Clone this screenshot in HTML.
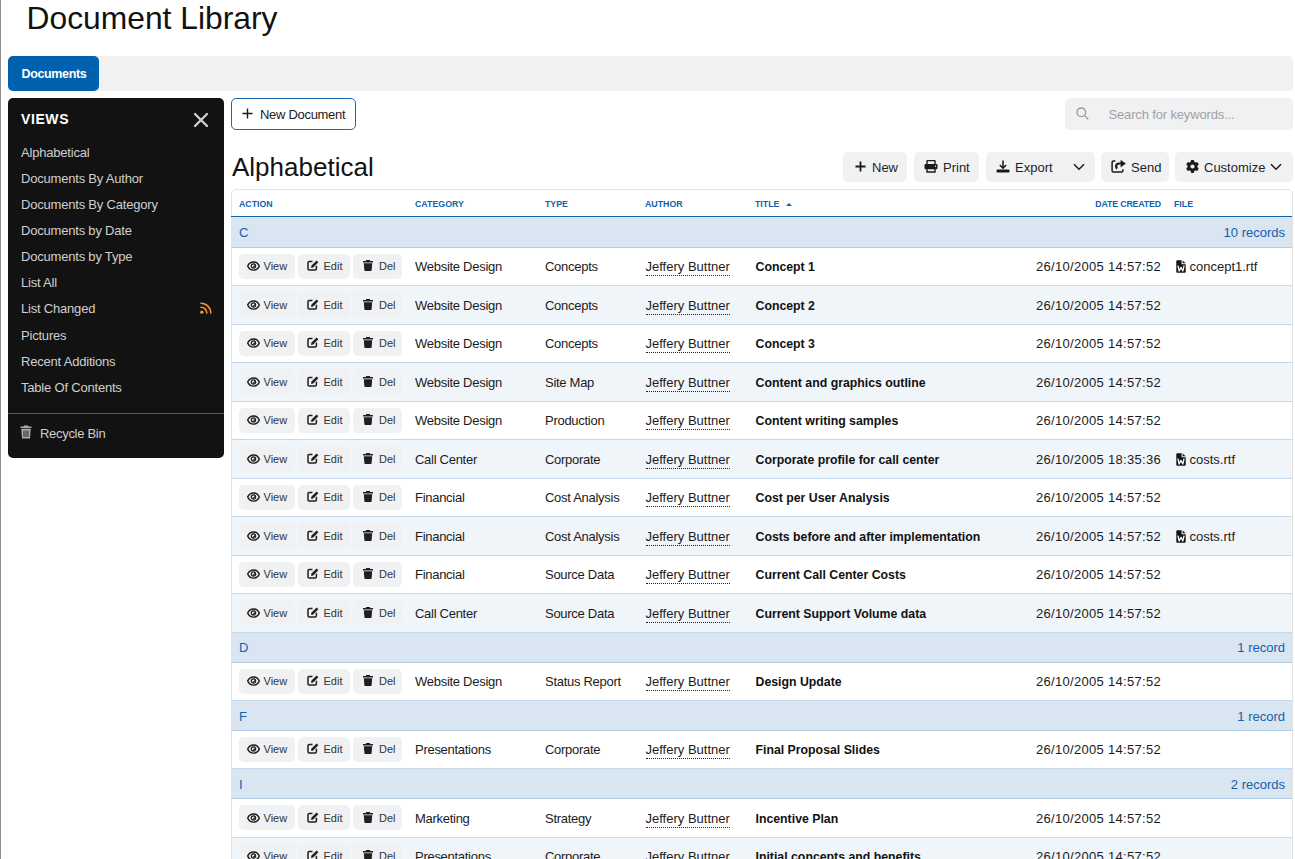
<!DOCTYPE html>
<html><head><meta charset="utf-8"><title>Document Library</title>
<style>
*{box-sizing:border-box;margin:0;padding:0}
html,body{width:1295px;height:859px;overflow:hidden;background:#fff}
body{position:relative;font-family:"Liberation Sans",sans-serif;color:#161616}
.a{position:absolute;white-space:nowrap}
#edge{left:0;top:0;width:1px;height:859px;background:#8c8c8c}
#title{left:26.5px;top:0;font-size:31.8px;line-height:36px;color:#121212}
#tabbar{left:8px;top:56px;width:1285px;height:35px;background:#f0f1f3;border-radius:5px}
#tab{left:8px;top:56px;width:91px;height:35px;background:#0062ae;border-radius:5px;color:#fff;font-weight:bold;font-size:12.5px;line-height:36px;padding-left:13.5px;letter-spacing:-0.35px}
#side{left:8px;top:98px;width:216px;height:360px;background:#121212;border-radius:5px;color:#c8c8c8}
#views{left:13px;top:11px;font-size:14px;line-height:20px;font-weight:bold;color:#fff;letter-spacing:0.6px}
#close{left:185px;top:14px;width:16px;height:16px}
.li{left:13px;font-size:13px;line-height:20px;color:#cfcfcf;letter-spacing:-0.2px}
#rss{left:192px;top:204px;width:12px;height:12px}
#divider{left:0;top:315px;width:216px;height:1px;background:#5a5a5a}
#bin{left:12px;top:327px;width:12px;height:14px}
#recycle{left:32px;top:326px;font-size:13px;line-height:20px;color:#cfcfcf;letter-spacing:-0.3px}
#newdoc{left:231px;top:98px;width:125px;height:32px;border:1px solid #1d66b1;border-radius:5px;font-size:13px;line-height:30px;color:#222}
#search{left:1065px;top:98px;width:228px;height:32px;background:#f0f1f3;border-radius:5px;font-size:13px;line-height:32px;color:#a2a2a2}
#h2{left:232px;top:152px;font-size:26px;line-height:30px;color:#121212}
.tb{top:152px;height:30px;background:#f0f1f3;border-radius:5px;font-size:13px;line-height:30px;color:#1f1f1f}
.tb svg{position:absolute}
.tb span{position:absolute;top:1px}
#table{left:231px;top:189px;width:1062px;height:700px;border:1px solid #e2e2e2;border-radius:5px 5px 0 0}
.th{top:1px;height:26px;line-height:26px;font-size:8.8px;font-weight:bold;color:#0f62b0}
#thline{left:-1px;top:26px;width:1061px;height:2px;background:#1561ab}
.grp{position:absolute;left:-1px;width:1061px;background:#d9e5f1;border-bottom:1px solid #b3cce6;color:#0f62b0;font-size:13px}
.row{position:absolute;left:0;width:1060px;border-bottom:1px solid #c5d9ee;font-size:13px;color:#1b1b1b}
.row.alt{background:#f0f5fa}
.c{position:absolute;top:0;white-space:nowrap}
.btn{position:absolute;height:25px;background:#f0f1f3;border-radius:5px;font-size:11px;color:#333}
.btn svg{position:absolute}
.btn span{position:absolute;line-height:25px;top:0}
.b39 .btn span{top:1px}
.b39 .btn svg{margin-top:1px}
.dt{letter-spacing:0.3px}
.cat{letter-spacing:-0.28px}
.auth{border-bottom:1px dotted #222;line-height:14px;padding-bottom:1px;display:inline-block}
.ttl{font-weight:bold;color:#111;font-size:12.3px}
</style></head>
<body>
<div class="a" id="edge"></div>
<div class="a" id="title">Document Library</div>
<div class="a" id="tabbar"></div>
<div class="a" id="tab">Documents</div>

<div class="a" id="side">
  <div class="a" id="views">VIEWS</div>
  <svg class="a" id="close" viewBox="0 0 16 16"><path d="M2 2L14 14M14 2L2 14" stroke="#cfcfcf" stroke-width="2.4" stroke-linecap="round"/></svg>
  <div class="a li" style="top:45px">Alphabetical</div>
  <div class="a li" style="top:71px">Documents By Author</div>
  <div class="a li" style="top:97px">Documents By Category</div>
  <div class="a li" style="top:123px">Documents by Date</div>
  <div class="a li" style="top:149px">Documents by Type</div>
  <div class="a li" style="top:175px">List All</div>
  <div class="a li" style="top:201px">List Changed</div>
  <svg class="a" id="rss" viewBox="0 0 12 12"><circle cx="1.8" cy="10.2" r="1.6" fill="#f4982c"/><path d="M1 5.2A5.8 5.8 0 0 1 6.8 11M1 1.2A9.8 9.8 0 0 1 10.8 11" stroke="#f4982c" stroke-width="1.6" fill="none" stroke-linecap="round"/></svg>
  <div class="a li" style="top:228px">Pictures</div>
  <div class="a li" style="top:254px">Recent Additions</div>
  <div class="a li" style="top:280px">Table Of Contents</div>
  <div class="a" id="divider"></div>
  <svg class="a" id="bin" viewBox="0 0 12 14"><path d="M4 0.5h4l0.5 1H11.5v1.5H0.5V1.5H3.5z" fill="#aaa"/><path d="M1.3 3.8h9.4l-0.7 9.7H2z" fill="#aaa"/><path d="M4 5.5v6.5M6 5.5v6.5M8 5.5v6.5" stroke="#121212" stroke-width="0.9"/></svg>
  <div class="a" id="recycle">Recycle Bin</div>
</div>

<div class="a" id="newdoc">
  <svg class="a" style="left:10px;top:9px" width="11" height="11" viewBox="0 0 11 11"><path d="M5.5 0.5v10M0.5 5.5h10" stroke="#1a1a1a" stroke-width="1.4"/></svg>
  <span class="a" style="left:28px;top:1px;letter-spacing:-0.3px">New Document</span>
</div>

<div class="a" id="search">
  <svg class="a" style="left:11px;top:9px" width="13" height="13" viewBox="0 0 13 13"><circle cx="5.3" cy="5.3" r="4.3" stroke="#999" stroke-width="1.3" fill="none"/><path d="M8.4 8.4L12.2 12.2" stroke="#999" stroke-width="1.3"/></svg>
  <span class="a" style="left:43.5px;top:1px;letter-spacing:-0.15px">Search for keywords...</span>
</div>

<div class="a" id="h2">Alphabetical</div>

<!-- toolbar -->
<div class="a tb" style="left:843px;width:64px">
  <svg style="left:11.5px;top:9px" width="11" height="11" viewBox="0 0 11 11"><path d="M5.5 0.5v10M0.5 5.5h10" stroke="#1a1a1a" stroke-width="1.8"/></svg>
  <span style="left:29px">New</span>
</div>
<div class="a tb" style="left:914px;width:65px">
  <svg style="left:10px;top:8px" width="14" height="13" viewBox="0 0 14 13"><path d="M3 4V1.2Q3 0.5 3.7 0.5H10.3Q11 0.5 11 1.2V4" stroke="#1a1a1a" stroke-width="1.4" fill="none"/><rect x="0.5" y="4" width="13" height="5.2" rx="1.2" fill="#1a1a1a"/><path d="M3 8.5V12H11V8.5" stroke="#1a1a1a" stroke-width="1.4" fill="none"/><circle cx="11.5" cy="6.2" r="0.7" fill="#f0f1f3"/></svg>
  <span style="left:29px">Print</span>
</div>
<div class="a tb" style="left:986px;width:109px">
  <svg style="left:10px;top:8px" width="14" height="13" viewBox="0 0 14 13"><path d="M7 0.5V8M3.8 5L7 8.2L10.2 5" stroke="#1a1a1a" stroke-width="1.5" fill="none"/><rect x="0.5" y="9.5" width="13" height="3" rx="1.2" fill="#1a1a1a"/></svg>
  <span style="left:29px">Export</span>
  <svg style="left:87px;top:11px" width="12" height="8" viewBox="0 0 12 8"><path d="M1 1.2L6 6.2L11 1.2" stroke="#1a1a1a" stroke-width="1.5" fill="none"/></svg>
</div>
<div class="a tb" style="left:1101px;width:68px">
  <svg style="left:10px;top:8px" width="16" height="13" viewBox="0 0 16 13"><path d="M4.3 1.1H2.4Q1.1 1.1 1.1 2.4V10.8Q1.1 12.1 2.4 12.1H10.6Q11.9 12.1 11.9 10.8V9.2" stroke="#1a1a1a" stroke-width="1.5" fill="none"/><path d="M10.6 3.5H8.2Q5.1 3.5 5.1 6.3Q5.1 7.6 6.1 8.6" stroke="#1a1a1a" stroke-width="2.2" fill="none"/><path d="M9.6 -0.2L14.8 3.5L9.6 7.5z" fill="#1a1a1a"/></svg>
  <span style="left:30px">Send</span>
</div>
<div class="a tb" style="left:1175px;width:118px">
  <svg style="left:11px;top:8px" width="13" height="13" viewBox="-6.5 -6.5 13 13"><circle r="4.9" fill="#1a1a1a"/><rect x="-1.7" y="-6.4" width="3.4" height="12.8" rx="0.8" fill="#1a1a1a"/><rect x="-1.7" y="-6.4" width="3.4" height="12.8" rx="0.8" fill="#1a1a1a" transform="rotate(60)"/><rect x="-1.7" y="-6.4" width="3.4" height="12.8" rx="0.8" fill="#1a1a1a" transform="rotate(120)"/><circle r="2.1" fill="#f0f1f3"/></svg>
  <span style="left:29px">Customize</span>
  <svg style="left:95px;top:11px" width="12" height="8" viewBox="0 0 12 8"><path d="M1 1.2L6 6.2L11 1.2" stroke="#1a1a1a" stroke-width="1.5" fill="none"/></svg>
</div>

<div class="a" id="table">
  <div class="a th" style="left:7px">ACTION</div>
  <div class="a th" style="left:183px">CATEGORY</div>
  <div class="a th" style="left:313px">TYPE</div>
  <div class="a th" style="left:413px">AUTHOR</div>
  <div class="a th" style="left:523px">TITLE <svg style="margin-left:4px;vertical-align:1.5px" width="6" height="3" viewBox="0 0 6 3"><path d="M0 3L3 0L6 3z" fill="#0f62b0"/></svg></div>
  <div class="a th" style="right:131px;letter-spacing:-0.15px">DATE CREATED</div>
  <div class="a th" style="left:942px">FILE</div>
  <div class="a" id="thline"></div>
  <!--ROWS--><div class="grp" style="top:27px;height:31px"><span class="c" style="left:8px;top:1px;line-height:30px">C</span><span class="c" style="right:7px;top:1px;line-height:30px">10 records</span></div>
<div class="row" style="top:58px;height:38px"><div class="btn" style="left:7px;top:6px;width:56px"><svg style="left:8px;top:7px" width="13" height="10" viewBox="0 0 13 10"><path d="M6.5 0.9C3.6 0.9 1.5 3 0.7 5C1.5 7 3.6 9.1 6.5 9.1S11.5 7 12.3 5C11.5 3 9.4 0.9 6.5 0.9z" stroke="#1f1f1f" stroke-width="1.45" fill="none"/><circle cx="6.5" cy="5" r="2.2" stroke="#1f1f1f" stroke-width="1.2" fill="none"/><path d="M6.5 5.2L7.6 4.1A1.5 1.5 0 0 1 5.4 6.2z" fill="#1f1f1f"/></svg><span style="left:24.5px">View</span></div><div class="btn" style="left:66px;top:6px;width:52px"><svg style="left:9px;top:6px" width="12" height="11" viewBox="0 0 12 11"><path d="M5.5 1.6H2.2Q1 1.6 1 2.8V8.8Q1 10 2.2 10H8.2Q9.4 10 9.4 8.8V5.8" stroke="#1f1f1f" stroke-width="1.5" fill="none"/><path d="M9.6 0.4L11.4 2.2L6.2 7.4L4 7.9L4.5 5.6z" fill="#1f1f1f"/></svg><span style="left:25.5px">Edit</span></div><div class="btn" style="left:121px;top:6px;width:49px"><svg style="left:10px;top:6px" width="10" height="11" viewBox="0 0 10 11"><path d="M3.2 0h3.6l0.5 0.9H10v1.5H0V0.9H2.7z" fill="#1f1f1f"/><path d="M0.8 3.2h8.4l-0.6 7.1Q8.5 11 7.8 11H2.2Q1.5 11 1.4 10.3z" fill="#1f1f1f"/></svg><span style="left:26px">Del</span></div><span class="c cat" style="left:183px;line-height:37px">Website Design</span><span class="c cat" style="left:313px;line-height:37px">Concepts</span><span class="c" style="left:413.5px;top:10.5px"><span class="auth">Jeffery Buttner</span></span><span class="c ttl" style="left:523.5px;top:1px;line-height:37px">Concept 1</span><span class="c dt" style="right:131px;line-height:37px">26/10/2005 14:57:52</span><svg class="c" style="left:944px;top:11.5px" width="10" height="13" viewBox="0 0 10 13"><path d="M0.3 1.2Q0.3 0.3 1.2 0.3H5.6V4.2H9.7V11.8Q9.7 12.7 8.8 12.7H1.2Q0.3 12.7 0.3 11.8z" fill="#141414"/><path d="M6.6 0.4L9.6 3.3H6.6z" fill="#141414"/><path d="M1.9 5.6L3.2 11L5 7.4L6.8 11L8.1 5.6" fill="none" stroke="#fff" stroke-width="1.3" stroke-linejoin="round"/></svg><span class="c" style="left:957.5px;line-height:37px">concept1.rtf</span></div>
<div class="row alt b39" style="top:96px;height:39px"><div class="btn" style="left:7px;top:6px;width:56px"><svg style="left:8px;top:7px" width="13" height="10" viewBox="0 0 13 10"><path d="M6.5 0.9C3.6 0.9 1.5 3 0.7 5C1.5 7 3.6 9.1 6.5 9.1S11.5 7 12.3 5C11.5 3 9.4 0.9 6.5 0.9z" stroke="#1f1f1f" stroke-width="1.45" fill="none"/><circle cx="6.5" cy="5" r="2.2" stroke="#1f1f1f" stroke-width="1.2" fill="none"/><path d="M6.5 5.2L7.6 4.1A1.5 1.5 0 0 1 5.4 6.2z" fill="#1f1f1f"/></svg><span style="left:24.5px">View</span></div><div class="btn" style="left:66px;top:6px;width:52px"><svg style="left:9px;top:6px" width="12" height="11" viewBox="0 0 12 11"><path d="M5.5 1.6H2.2Q1 1.6 1 2.8V8.8Q1 10 2.2 10H8.2Q9.4 10 9.4 8.8V5.8" stroke="#1f1f1f" stroke-width="1.5" fill="none"/><path d="M9.6 0.4L11.4 2.2L6.2 7.4L4 7.9L4.5 5.6z" fill="#1f1f1f"/></svg><span style="left:25.5px">Edit</span></div><div class="btn" style="left:121px;top:6px;width:49px"><svg style="left:10px;top:6px" width="10" height="11" viewBox="0 0 10 11"><path d="M3.2 0h3.6l0.5 0.9H10v1.5H0V0.9H2.7z" fill="#1f1f1f"/><path d="M0.8 3.2h8.4l-0.6 7.1Q8.5 11 7.8 11H2.2Q1.5 11 1.4 10.3z" fill="#1f1f1f"/></svg><span style="left:26px">Del</span></div><span class="c cat" style="left:183px;line-height:39px">Website Design</span><span class="c cat" style="left:313px;line-height:39px">Concepts</span><span class="c" style="left:413.5px;top:11.5px"><span class="auth">Jeffery Buttner</span></span><span class="c ttl" style="left:523.5px;top:1px;line-height:39px">Concept 2</span><span class="c dt" style="right:131px;line-height:39px">26/10/2005 14:57:52</span></div>
<div class="row" style="top:135px;height:38px"><div class="btn" style="left:7px;top:6px;width:56px"><svg style="left:8px;top:7px" width="13" height="10" viewBox="0 0 13 10"><path d="M6.5 0.9C3.6 0.9 1.5 3 0.7 5C1.5 7 3.6 9.1 6.5 9.1S11.5 7 12.3 5C11.5 3 9.4 0.9 6.5 0.9z" stroke="#1f1f1f" stroke-width="1.45" fill="none"/><circle cx="6.5" cy="5" r="2.2" stroke="#1f1f1f" stroke-width="1.2" fill="none"/><path d="M6.5 5.2L7.6 4.1A1.5 1.5 0 0 1 5.4 6.2z" fill="#1f1f1f"/></svg><span style="left:24.5px">View</span></div><div class="btn" style="left:66px;top:6px;width:52px"><svg style="left:9px;top:6px" width="12" height="11" viewBox="0 0 12 11"><path d="M5.5 1.6H2.2Q1 1.6 1 2.8V8.8Q1 10 2.2 10H8.2Q9.4 10 9.4 8.8V5.8" stroke="#1f1f1f" stroke-width="1.5" fill="none"/><path d="M9.6 0.4L11.4 2.2L6.2 7.4L4 7.9L4.5 5.6z" fill="#1f1f1f"/></svg><span style="left:25.5px">Edit</span></div><div class="btn" style="left:121px;top:6px;width:49px"><svg style="left:10px;top:6px" width="10" height="11" viewBox="0 0 10 11"><path d="M3.2 0h3.6l0.5 0.9H10v1.5H0V0.9H2.7z" fill="#1f1f1f"/><path d="M0.8 3.2h8.4l-0.6 7.1Q8.5 11 7.8 11H2.2Q1.5 11 1.4 10.3z" fill="#1f1f1f"/></svg><span style="left:26px">Del</span></div><span class="c cat" style="left:183px;line-height:37px">Website Design</span><span class="c cat" style="left:313px;line-height:37px">Concepts</span><span class="c" style="left:413.5px;top:10.5px"><span class="auth">Jeffery Buttner</span></span><span class="c ttl" style="left:523.5px;top:1px;line-height:37px">Concept 3</span><span class="c dt" style="right:131px;line-height:37px">26/10/2005 14:57:52</span></div>
<div class="row alt b39" style="top:173px;height:39px"><div class="btn" style="left:7px;top:6px;width:56px"><svg style="left:8px;top:7px" width="13" height="10" viewBox="0 0 13 10"><path d="M6.5 0.9C3.6 0.9 1.5 3 0.7 5C1.5 7 3.6 9.1 6.5 9.1S11.5 7 12.3 5C11.5 3 9.4 0.9 6.5 0.9z" stroke="#1f1f1f" stroke-width="1.45" fill="none"/><circle cx="6.5" cy="5" r="2.2" stroke="#1f1f1f" stroke-width="1.2" fill="none"/><path d="M6.5 5.2L7.6 4.1A1.5 1.5 0 0 1 5.4 6.2z" fill="#1f1f1f"/></svg><span style="left:24.5px">View</span></div><div class="btn" style="left:66px;top:6px;width:52px"><svg style="left:9px;top:6px" width="12" height="11" viewBox="0 0 12 11"><path d="M5.5 1.6H2.2Q1 1.6 1 2.8V8.8Q1 10 2.2 10H8.2Q9.4 10 9.4 8.8V5.8" stroke="#1f1f1f" stroke-width="1.5" fill="none"/><path d="M9.6 0.4L11.4 2.2L6.2 7.4L4 7.9L4.5 5.6z" fill="#1f1f1f"/></svg><span style="left:25.5px">Edit</span></div><div class="btn" style="left:121px;top:6px;width:49px"><svg style="left:10px;top:6px" width="10" height="11" viewBox="0 0 10 11"><path d="M3.2 0h3.6l0.5 0.9H10v1.5H0V0.9H2.7z" fill="#1f1f1f"/><path d="M0.8 3.2h8.4l-0.6 7.1Q8.5 11 7.8 11H2.2Q1.5 11 1.4 10.3z" fill="#1f1f1f"/></svg><span style="left:26px">Del</span></div><span class="c cat" style="left:183px;line-height:39px">Website Design</span><span class="c cat" style="left:313px;line-height:39px">Site Map</span><span class="c" style="left:413.5px;top:11.5px"><span class="auth">Jeffery Buttner</span></span><span class="c ttl" style="left:523.5px;top:1px;line-height:39px">Content and graphics outline</span><span class="c dt" style="right:131px;line-height:39px">26/10/2005 14:57:52</span></div>
<div class="row" style="top:212px;height:38px"><div class="btn" style="left:7px;top:6px;width:56px"><svg style="left:8px;top:7px" width="13" height="10" viewBox="0 0 13 10"><path d="M6.5 0.9C3.6 0.9 1.5 3 0.7 5C1.5 7 3.6 9.1 6.5 9.1S11.5 7 12.3 5C11.5 3 9.4 0.9 6.5 0.9z" stroke="#1f1f1f" stroke-width="1.45" fill="none"/><circle cx="6.5" cy="5" r="2.2" stroke="#1f1f1f" stroke-width="1.2" fill="none"/><path d="M6.5 5.2L7.6 4.1A1.5 1.5 0 0 1 5.4 6.2z" fill="#1f1f1f"/></svg><span style="left:24.5px">View</span></div><div class="btn" style="left:66px;top:6px;width:52px"><svg style="left:9px;top:6px" width="12" height="11" viewBox="0 0 12 11"><path d="M5.5 1.6H2.2Q1 1.6 1 2.8V8.8Q1 10 2.2 10H8.2Q9.4 10 9.4 8.8V5.8" stroke="#1f1f1f" stroke-width="1.5" fill="none"/><path d="M9.6 0.4L11.4 2.2L6.2 7.4L4 7.9L4.5 5.6z" fill="#1f1f1f"/></svg><span style="left:25.5px">Edit</span></div><div class="btn" style="left:121px;top:6px;width:49px"><svg style="left:10px;top:6px" width="10" height="11" viewBox="0 0 10 11"><path d="M3.2 0h3.6l0.5 0.9H10v1.5H0V0.9H2.7z" fill="#1f1f1f"/><path d="M0.8 3.2h8.4l-0.6 7.1Q8.5 11 7.8 11H2.2Q1.5 11 1.4 10.3z" fill="#1f1f1f"/></svg><span style="left:26px">Del</span></div><span class="c cat" style="left:183px;line-height:37px">Website Design</span><span class="c cat" style="left:313px;line-height:37px">Production</span><span class="c" style="left:413.5px;top:10.5px"><span class="auth">Jeffery Buttner</span></span><span class="c ttl" style="left:523.5px;top:1px;line-height:37px">Content writing samples</span><span class="c dt" style="right:131px;line-height:37px">26/10/2005 14:57:52</span></div>
<div class="row alt b39" style="top:250px;height:39px"><div class="btn" style="left:7px;top:6px;width:56px"><svg style="left:8px;top:7px" width="13" height="10" viewBox="0 0 13 10"><path d="M6.5 0.9C3.6 0.9 1.5 3 0.7 5C1.5 7 3.6 9.1 6.5 9.1S11.5 7 12.3 5C11.5 3 9.4 0.9 6.5 0.9z" stroke="#1f1f1f" stroke-width="1.45" fill="none"/><circle cx="6.5" cy="5" r="2.2" stroke="#1f1f1f" stroke-width="1.2" fill="none"/><path d="M6.5 5.2L7.6 4.1A1.5 1.5 0 0 1 5.4 6.2z" fill="#1f1f1f"/></svg><span style="left:24.5px">View</span></div><div class="btn" style="left:66px;top:6px;width:52px"><svg style="left:9px;top:6px" width="12" height="11" viewBox="0 0 12 11"><path d="M5.5 1.6H2.2Q1 1.6 1 2.8V8.8Q1 10 2.2 10H8.2Q9.4 10 9.4 8.8V5.8" stroke="#1f1f1f" stroke-width="1.5" fill="none"/><path d="M9.6 0.4L11.4 2.2L6.2 7.4L4 7.9L4.5 5.6z" fill="#1f1f1f"/></svg><span style="left:25.5px">Edit</span></div><div class="btn" style="left:121px;top:6px;width:49px"><svg style="left:10px;top:6px" width="10" height="11" viewBox="0 0 10 11"><path d="M3.2 0h3.6l0.5 0.9H10v1.5H0V0.9H2.7z" fill="#1f1f1f"/><path d="M0.8 3.2h8.4l-0.6 7.1Q8.5 11 7.8 11H2.2Q1.5 11 1.4 10.3z" fill="#1f1f1f"/></svg><span style="left:26px">Del</span></div><span class="c cat" style="left:183px;line-height:39px">Call Center</span><span class="c cat" style="left:313px;line-height:39px">Corporate</span><span class="c" style="left:413.5px;top:11.5px"><span class="auth">Jeffery Buttner</span></span><span class="c ttl" style="left:523.5px;top:1px;line-height:39px">Corporate profile for call center</span><span class="c dt" style="right:131px;line-height:39px">26/10/2005 18:35:36</span><svg class="c" style="left:944px;top:12.5px" width="10" height="13" viewBox="0 0 10 13"><path d="M0.3 1.2Q0.3 0.3 1.2 0.3H5.6V4.2H9.7V11.8Q9.7 12.7 8.8 12.7H1.2Q0.3 12.7 0.3 11.8z" fill="#141414"/><path d="M6.6 0.4L9.6 3.3H6.6z" fill="#141414"/><path d="M1.9 5.6L3.2 11L5 7.4L6.8 11L8.1 5.6" fill="none" stroke="#fff" stroke-width="1.3" stroke-linejoin="round"/></svg><span class="c" style="left:957.5px;line-height:39px">costs.rtf</span></div>
<div class="row" style="top:289px;height:38px"><div class="btn" style="left:7px;top:6px;width:56px"><svg style="left:8px;top:7px" width="13" height="10" viewBox="0 0 13 10"><path d="M6.5 0.9C3.6 0.9 1.5 3 0.7 5C1.5 7 3.6 9.1 6.5 9.1S11.5 7 12.3 5C11.5 3 9.4 0.9 6.5 0.9z" stroke="#1f1f1f" stroke-width="1.45" fill="none"/><circle cx="6.5" cy="5" r="2.2" stroke="#1f1f1f" stroke-width="1.2" fill="none"/><path d="M6.5 5.2L7.6 4.1A1.5 1.5 0 0 1 5.4 6.2z" fill="#1f1f1f"/></svg><span style="left:24.5px">View</span></div><div class="btn" style="left:66px;top:6px;width:52px"><svg style="left:9px;top:6px" width="12" height="11" viewBox="0 0 12 11"><path d="M5.5 1.6H2.2Q1 1.6 1 2.8V8.8Q1 10 2.2 10H8.2Q9.4 10 9.4 8.8V5.8" stroke="#1f1f1f" stroke-width="1.5" fill="none"/><path d="M9.6 0.4L11.4 2.2L6.2 7.4L4 7.9L4.5 5.6z" fill="#1f1f1f"/></svg><span style="left:25.5px">Edit</span></div><div class="btn" style="left:121px;top:6px;width:49px"><svg style="left:10px;top:6px" width="10" height="11" viewBox="0 0 10 11"><path d="M3.2 0h3.6l0.5 0.9H10v1.5H0V0.9H2.7z" fill="#1f1f1f"/><path d="M0.8 3.2h8.4l-0.6 7.1Q8.5 11 7.8 11H2.2Q1.5 11 1.4 10.3z" fill="#1f1f1f"/></svg><span style="left:26px">Del</span></div><span class="c cat" style="left:183px;line-height:37px">Financial</span><span class="c cat" style="left:313px;line-height:37px">Cost Analysis</span><span class="c" style="left:413.5px;top:10.5px"><span class="auth">Jeffery Buttner</span></span><span class="c ttl" style="left:523.5px;top:1px;line-height:37px">Cost per User Analysis</span><span class="c dt" style="right:131px;line-height:37px">26/10/2005 14:57:52</span></div>
<div class="row alt b39" style="top:327px;height:39px"><div class="btn" style="left:7px;top:6px;width:56px"><svg style="left:8px;top:7px" width="13" height="10" viewBox="0 0 13 10"><path d="M6.5 0.9C3.6 0.9 1.5 3 0.7 5C1.5 7 3.6 9.1 6.5 9.1S11.5 7 12.3 5C11.5 3 9.4 0.9 6.5 0.9z" stroke="#1f1f1f" stroke-width="1.45" fill="none"/><circle cx="6.5" cy="5" r="2.2" stroke="#1f1f1f" stroke-width="1.2" fill="none"/><path d="M6.5 5.2L7.6 4.1A1.5 1.5 0 0 1 5.4 6.2z" fill="#1f1f1f"/></svg><span style="left:24.5px">View</span></div><div class="btn" style="left:66px;top:6px;width:52px"><svg style="left:9px;top:6px" width="12" height="11" viewBox="0 0 12 11"><path d="M5.5 1.6H2.2Q1 1.6 1 2.8V8.8Q1 10 2.2 10H8.2Q9.4 10 9.4 8.8V5.8" stroke="#1f1f1f" stroke-width="1.5" fill="none"/><path d="M9.6 0.4L11.4 2.2L6.2 7.4L4 7.9L4.5 5.6z" fill="#1f1f1f"/></svg><span style="left:25.5px">Edit</span></div><div class="btn" style="left:121px;top:6px;width:49px"><svg style="left:10px;top:6px" width="10" height="11" viewBox="0 0 10 11"><path d="M3.2 0h3.6l0.5 0.9H10v1.5H0V0.9H2.7z" fill="#1f1f1f"/><path d="M0.8 3.2h8.4l-0.6 7.1Q8.5 11 7.8 11H2.2Q1.5 11 1.4 10.3z" fill="#1f1f1f"/></svg><span style="left:26px">Del</span></div><span class="c cat" style="left:183px;line-height:39px">Financial</span><span class="c cat" style="left:313px;line-height:39px">Cost Analysis</span><span class="c" style="left:413.5px;top:11.5px"><span class="auth">Jeffery Buttner</span></span><span class="c ttl" style="left:523.5px;top:1px;line-height:39px">Costs before and after implementation</span><span class="c dt" style="right:131px;line-height:39px">26/10/2005 14:57:52</span><svg class="c" style="left:944px;top:12.5px" width="10" height="13" viewBox="0 0 10 13"><path d="M0.3 1.2Q0.3 0.3 1.2 0.3H5.6V4.2H9.7V11.8Q9.7 12.7 8.8 12.7H1.2Q0.3 12.7 0.3 11.8z" fill="#141414"/><path d="M6.6 0.4L9.6 3.3H6.6z" fill="#141414"/><path d="M1.9 5.6L3.2 11L5 7.4L6.8 11L8.1 5.6" fill="none" stroke="#fff" stroke-width="1.3" stroke-linejoin="round"/></svg><span class="c" style="left:957.5px;line-height:39px">costs.rtf</span></div>
<div class="row" style="top:366px;height:38px"><div class="btn" style="left:7px;top:6px;width:56px"><svg style="left:8px;top:7px" width="13" height="10" viewBox="0 0 13 10"><path d="M6.5 0.9C3.6 0.9 1.5 3 0.7 5C1.5 7 3.6 9.1 6.5 9.1S11.5 7 12.3 5C11.5 3 9.4 0.9 6.5 0.9z" stroke="#1f1f1f" stroke-width="1.45" fill="none"/><circle cx="6.5" cy="5" r="2.2" stroke="#1f1f1f" stroke-width="1.2" fill="none"/><path d="M6.5 5.2L7.6 4.1A1.5 1.5 0 0 1 5.4 6.2z" fill="#1f1f1f"/></svg><span style="left:24.5px">View</span></div><div class="btn" style="left:66px;top:6px;width:52px"><svg style="left:9px;top:6px" width="12" height="11" viewBox="0 0 12 11"><path d="M5.5 1.6H2.2Q1 1.6 1 2.8V8.8Q1 10 2.2 10H8.2Q9.4 10 9.4 8.8V5.8" stroke="#1f1f1f" stroke-width="1.5" fill="none"/><path d="M9.6 0.4L11.4 2.2L6.2 7.4L4 7.9L4.5 5.6z" fill="#1f1f1f"/></svg><span style="left:25.5px">Edit</span></div><div class="btn" style="left:121px;top:6px;width:49px"><svg style="left:10px;top:6px" width="10" height="11" viewBox="0 0 10 11"><path d="M3.2 0h3.6l0.5 0.9H10v1.5H0V0.9H2.7z" fill="#1f1f1f"/><path d="M0.8 3.2h8.4l-0.6 7.1Q8.5 11 7.8 11H2.2Q1.5 11 1.4 10.3z" fill="#1f1f1f"/></svg><span style="left:26px">Del</span></div><span class="c cat" style="left:183px;line-height:37px">Financial</span><span class="c cat" style="left:313px;line-height:37px">Source Data</span><span class="c" style="left:413.5px;top:10.5px"><span class="auth">Jeffery Buttner</span></span><span class="c ttl" style="left:523.5px;top:1px;line-height:37px">Current Call Center Costs</span><span class="c dt" style="right:131px;line-height:37px">26/10/2005 14:57:52</span></div>
<div class="row alt b39" style="top:404px;height:39px"><div class="btn" style="left:7px;top:6px;width:56px"><svg style="left:8px;top:7px" width="13" height="10" viewBox="0 0 13 10"><path d="M6.5 0.9C3.6 0.9 1.5 3 0.7 5C1.5 7 3.6 9.1 6.5 9.1S11.5 7 12.3 5C11.5 3 9.4 0.9 6.5 0.9z" stroke="#1f1f1f" stroke-width="1.45" fill="none"/><circle cx="6.5" cy="5" r="2.2" stroke="#1f1f1f" stroke-width="1.2" fill="none"/><path d="M6.5 5.2L7.6 4.1A1.5 1.5 0 0 1 5.4 6.2z" fill="#1f1f1f"/></svg><span style="left:24.5px">View</span></div><div class="btn" style="left:66px;top:6px;width:52px"><svg style="left:9px;top:6px" width="12" height="11" viewBox="0 0 12 11"><path d="M5.5 1.6H2.2Q1 1.6 1 2.8V8.8Q1 10 2.2 10H8.2Q9.4 10 9.4 8.8V5.8" stroke="#1f1f1f" stroke-width="1.5" fill="none"/><path d="M9.6 0.4L11.4 2.2L6.2 7.4L4 7.9L4.5 5.6z" fill="#1f1f1f"/></svg><span style="left:25.5px">Edit</span></div><div class="btn" style="left:121px;top:6px;width:49px"><svg style="left:10px;top:6px" width="10" height="11" viewBox="0 0 10 11"><path d="M3.2 0h3.6l0.5 0.9H10v1.5H0V0.9H2.7z" fill="#1f1f1f"/><path d="M0.8 3.2h8.4l-0.6 7.1Q8.5 11 7.8 11H2.2Q1.5 11 1.4 10.3z" fill="#1f1f1f"/></svg><span style="left:26px">Del</span></div><span class="c cat" style="left:183px;line-height:39px">Call Center</span><span class="c cat" style="left:313px;line-height:39px">Source Data</span><span class="c" style="left:413.5px;top:11.5px"><span class="auth">Jeffery Buttner</span></span><span class="c ttl" style="left:523.5px;top:1px;line-height:39px">Current Support Volume data</span><span class="c dt" style="right:131px;line-height:39px">26/10/2005 14:57:52</span></div>
<div class="grp" style="top:443px;height:30px"><span class="c" style="left:8px;top:0px;line-height:29px">D</span><span class="c" style="right:7px;top:0px;line-height:29px">1 record</span></div>
<div class="row" style="top:473px;height:38px"><div class="btn" style="left:7px;top:6px;width:56px"><svg style="left:8px;top:7px" width="13" height="10" viewBox="0 0 13 10"><path d="M6.5 0.9C3.6 0.9 1.5 3 0.7 5C1.5 7 3.6 9.1 6.5 9.1S11.5 7 12.3 5C11.5 3 9.4 0.9 6.5 0.9z" stroke="#1f1f1f" stroke-width="1.45" fill="none"/><circle cx="6.5" cy="5" r="2.2" stroke="#1f1f1f" stroke-width="1.2" fill="none"/><path d="M6.5 5.2L7.6 4.1A1.5 1.5 0 0 1 5.4 6.2z" fill="#1f1f1f"/></svg><span style="left:24.5px">View</span></div><div class="btn" style="left:66px;top:6px;width:52px"><svg style="left:9px;top:6px" width="12" height="11" viewBox="0 0 12 11"><path d="M5.5 1.6H2.2Q1 1.6 1 2.8V8.8Q1 10 2.2 10H8.2Q9.4 10 9.4 8.8V5.8" stroke="#1f1f1f" stroke-width="1.5" fill="none"/><path d="M9.6 0.4L11.4 2.2L6.2 7.4L4 7.9L4.5 5.6z" fill="#1f1f1f"/></svg><span style="left:25.5px">Edit</span></div><div class="btn" style="left:121px;top:6px;width:49px"><svg style="left:10px;top:6px" width="10" height="11" viewBox="0 0 10 11"><path d="M3.2 0h3.6l0.5 0.9H10v1.5H0V0.9H2.7z" fill="#1f1f1f"/><path d="M0.8 3.2h8.4l-0.6 7.1Q8.5 11 7.8 11H2.2Q1.5 11 1.4 10.3z" fill="#1f1f1f"/></svg><span style="left:26px">Del</span></div><span class="c cat" style="left:183px;line-height:37px">Website Design</span><span class="c cat" style="left:313px;line-height:37px">Status Report</span><span class="c" style="left:413.5px;top:10.5px"><span class="auth">Jeffery Buttner</span></span><span class="c ttl" style="left:523.5px;top:1px;line-height:37px">Design Update</span><span class="c dt" style="right:131px;line-height:37px">26/10/2005 14:57:52</span></div>
<div class="grp" style="top:511px;height:30px"><span class="c" style="left:8px;top:1px;line-height:29px">F</span><span class="c" style="right:7px;top:1px;line-height:29px">1 record</span></div>
<div class="row" style="top:541px;height:38px"><div class="btn" style="left:7px;top:6px;width:56px"><svg style="left:8px;top:7px" width="13" height="10" viewBox="0 0 13 10"><path d="M6.5 0.9C3.6 0.9 1.5 3 0.7 5C1.5 7 3.6 9.1 6.5 9.1S11.5 7 12.3 5C11.5 3 9.4 0.9 6.5 0.9z" stroke="#1f1f1f" stroke-width="1.45" fill="none"/><circle cx="6.5" cy="5" r="2.2" stroke="#1f1f1f" stroke-width="1.2" fill="none"/><path d="M6.5 5.2L7.6 4.1A1.5 1.5 0 0 1 5.4 6.2z" fill="#1f1f1f"/></svg><span style="left:24.5px">View</span></div><div class="btn" style="left:66px;top:6px;width:52px"><svg style="left:9px;top:6px" width="12" height="11" viewBox="0 0 12 11"><path d="M5.5 1.6H2.2Q1 1.6 1 2.8V8.8Q1 10 2.2 10H8.2Q9.4 10 9.4 8.8V5.8" stroke="#1f1f1f" stroke-width="1.5" fill="none"/><path d="M9.6 0.4L11.4 2.2L6.2 7.4L4 7.9L4.5 5.6z" fill="#1f1f1f"/></svg><span style="left:25.5px">Edit</span></div><div class="btn" style="left:121px;top:6px;width:49px"><svg style="left:10px;top:6px" width="10" height="11" viewBox="0 0 10 11"><path d="M3.2 0h3.6l0.5 0.9H10v1.5H0V0.9H2.7z" fill="#1f1f1f"/><path d="M0.8 3.2h8.4l-0.6 7.1Q8.5 11 7.8 11H2.2Q1.5 11 1.4 10.3z" fill="#1f1f1f"/></svg><span style="left:26px">Del</span></div><span class="c cat" style="left:183px;line-height:37px">Presentations</span><span class="c cat" style="left:313px;line-height:37px">Corporate</span><span class="c" style="left:413.5px;top:10.5px"><span class="auth">Jeffery Buttner</span></span><span class="c ttl" style="left:523.5px;top:1px;line-height:37px">Final Proposal Slides</span><span class="c dt" style="right:131px;line-height:37px">26/10/2005 14:57:52</span></div>
<div class="grp" style="top:579px;height:30px"><span class="c" style="left:8px;top:1px;line-height:29px">I</span><span class="c" style="right:7px;top:1px;line-height:29px">2 records</span></div>
<div class="row b39" style="top:609px;height:39px"><div class="btn" style="left:7px;top:6px;width:56px"><svg style="left:8px;top:7px" width="13" height="10" viewBox="0 0 13 10"><path d="M6.5 0.9C3.6 0.9 1.5 3 0.7 5C1.5 7 3.6 9.1 6.5 9.1S11.5 7 12.3 5C11.5 3 9.4 0.9 6.5 0.9z" stroke="#1f1f1f" stroke-width="1.45" fill="none"/><circle cx="6.5" cy="5" r="2.2" stroke="#1f1f1f" stroke-width="1.2" fill="none"/><path d="M6.5 5.2L7.6 4.1A1.5 1.5 0 0 1 5.4 6.2z" fill="#1f1f1f"/></svg><span style="left:24.5px">View</span></div><div class="btn" style="left:66px;top:6px;width:52px"><svg style="left:9px;top:6px" width="12" height="11" viewBox="0 0 12 11"><path d="M5.5 1.6H2.2Q1 1.6 1 2.8V8.8Q1 10 2.2 10H8.2Q9.4 10 9.4 8.8V5.8" stroke="#1f1f1f" stroke-width="1.5" fill="none"/><path d="M9.6 0.4L11.4 2.2L6.2 7.4L4 7.9L4.5 5.6z" fill="#1f1f1f"/></svg><span style="left:25.5px">Edit</span></div><div class="btn" style="left:121px;top:6px;width:49px"><svg style="left:10px;top:6px" width="10" height="11" viewBox="0 0 10 11"><path d="M3.2 0h3.6l0.5 0.9H10v1.5H0V0.9H2.7z" fill="#1f1f1f"/><path d="M0.8 3.2h8.4l-0.6 7.1Q8.5 11 7.8 11H2.2Q1.5 11 1.4 10.3z" fill="#1f1f1f"/></svg><span style="left:26px">Del</span></div><span class="c cat" style="left:183px;line-height:39px">Marketing</span><span class="c cat" style="left:313px;line-height:39px">Strategy</span><span class="c" style="left:413.5px;top:11.5px"><span class="auth">Jeffery Buttner</span></span><span class="c ttl" style="left:523.5px;top:1px;line-height:39px">Incentive Plan</span><span class="c dt" style="right:131px;line-height:39px">26/10/2005 14:57:52</span></div>
<div class="row alt" style="top:648px;height:38px"><div class="btn" style="left:7px;top:6px;width:56px"><svg style="left:8px;top:7px" width="13" height="10" viewBox="0 0 13 10"><path d="M6.5 0.9C3.6 0.9 1.5 3 0.7 5C1.5 7 3.6 9.1 6.5 9.1S11.5 7 12.3 5C11.5 3 9.4 0.9 6.5 0.9z" stroke="#1f1f1f" stroke-width="1.45" fill="none"/><circle cx="6.5" cy="5" r="2.2" stroke="#1f1f1f" stroke-width="1.2" fill="none"/><path d="M6.5 5.2L7.6 4.1A1.5 1.5 0 0 1 5.4 6.2z" fill="#1f1f1f"/></svg><span style="left:24.5px">View</span></div><div class="btn" style="left:66px;top:6px;width:52px"><svg style="left:9px;top:6px" width="12" height="11" viewBox="0 0 12 11"><path d="M5.5 1.6H2.2Q1 1.6 1 2.8V8.8Q1 10 2.2 10H8.2Q9.4 10 9.4 8.8V5.8" stroke="#1f1f1f" stroke-width="1.5" fill="none"/><path d="M9.6 0.4L11.4 2.2L6.2 7.4L4 7.9L4.5 5.6z" fill="#1f1f1f"/></svg><span style="left:25.5px">Edit</span></div><div class="btn" style="left:121px;top:6px;width:49px"><svg style="left:10px;top:6px" width="10" height="11" viewBox="0 0 10 11"><path d="M3.2 0h3.6l0.5 0.9H10v1.5H0V0.9H2.7z" fill="#1f1f1f"/><path d="M0.8 3.2h8.4l-0.6 7.1Q8.5 11 7.8 11H2.2Q1.5 11 1.4 10.3z" fill="#1f1f1f"/></svg><span style="left:26px">Del</span></div><span class="c cat" style="left:183px;line-height:37px">Presentations</span><span class="c cat" style="left:313px;line-height:37px">Corporate</span><span class="c" style="left:413.5px;top:10.5px"><span class="auth">Jeffery Buttner</span></span><span class="c ttl" style="left:523.5px;top:1px;line-height:37px">Initial concepts and benefits</span><span class="c dt" style="right:131px;line-height:37px">26/10/2005 14:57:52</span></div><!--/ROWS-->
</div>
</body></html>
